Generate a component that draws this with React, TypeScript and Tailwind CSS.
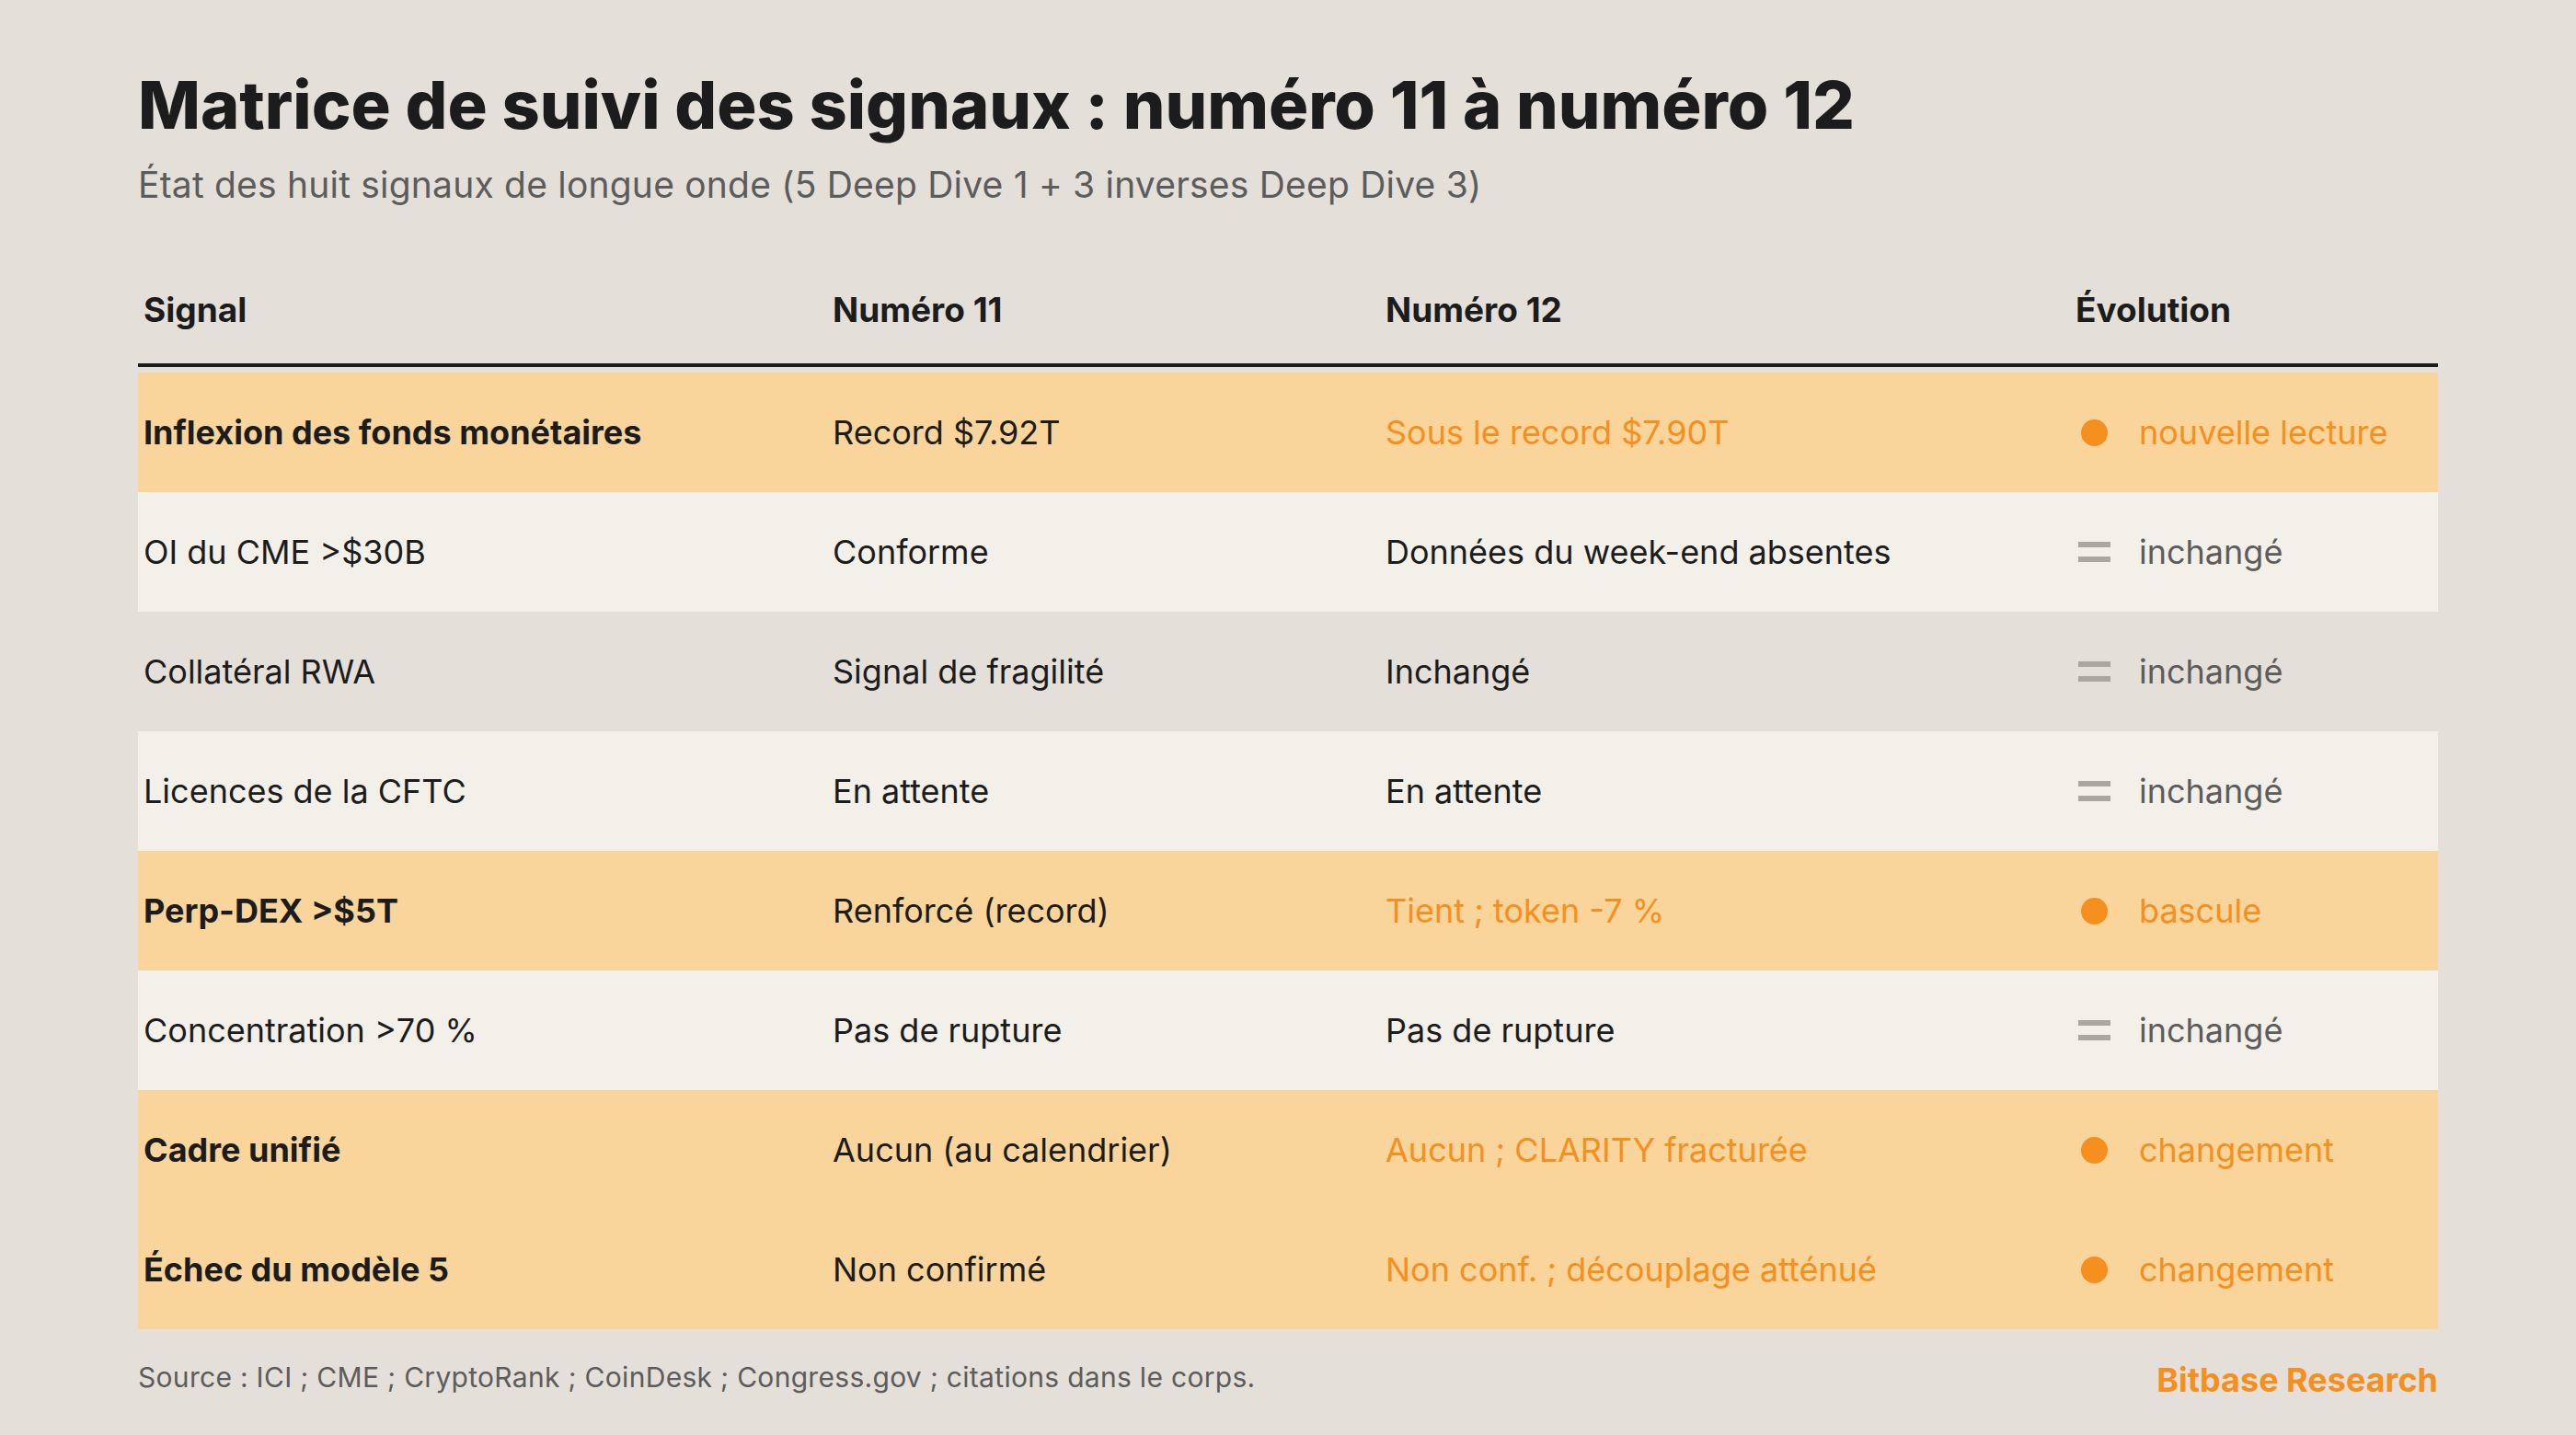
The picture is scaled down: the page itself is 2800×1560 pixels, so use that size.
const rows = [
  { signal: 'Inflexion des fonds monétaires', n11: 'Record $7.92T', n12: 'Sous le record $7.90T', evo: 'nouvelle lecture', hot: true },
  { signal: 'OI du CME >$30B', n11: 'Conforme', n12: 'Données du week-end absentes', evo: 'inchangé', hot: false },
  { signal: 'Collatéral RWA', n11: 'Signal de fragilité', n12: 'Inchangé', evo: 'inchangé', hot: false },
  { signal: 'Licences de la CFTC', n11: 'En attente', n12: 'En attente', evo: 'inchangé', hot: false },
  { signal: 'Perp-DEX >$5T', n11: 'Renforcé (record)', n12: 'Tient ; token -7 %', evo: 'bascule', hot: true },
  { signal: 'Concentration >70 %', n11: 'Pas de rupture', n12: 'Pas de rupture', evo: 'inchangé', hot: false },
  { signal: 'Cadre unifié', n11: 'Aucun (au calendrier)', n12: 'Aucun ; CLARITY fracturée', evo: 'changement', hot: true },
  { signal: 'Échec du modèle 5', n11: 'Non confirmé', n12: 'Non conf. ; découplage atténué', evo: 'changement', hot: true },
];

const cols = 'grid grid-cols-[750px_600px_750px_400px]';

export default function App() {
  return (
    <div className="min-h-screen bg-[#e4dfd9] px-[150px] pt-[78px] font-['Inter',sans-serif] text-[#1c1c1c]">
      <h1 className="text-[72px] font-extrabold leading-none">
        Matrice de suivi des signaux : numéro 11 à numéro 12
      </h1>
      <p className="mt-[31px] text-[39px] leading-none tracking-[0.2px] text-[#5c5c5c]">
        État des huit signaux de longue onde (5 Deep Dive 1 + 3 inverses Deep Dive 3)
      </p>

      <div className="mt-[98px] w-[2500px]">
        <div className={`${cols} border-b-4 border-[#1c1c1c] pb-[40px] text-[37px] font-bold leading-none`}>
          <div className="pl-[6px]">Signal</div>
          <div className="pl-[5px]">Numéro 11</div>
          <div className="pl-[6px]">Numéro 12</div>
          <div className="pl-[6px]">Évolution</div>
        </div>

        <div className="mt-[6px]">
          {rows.map((r, i) => {
            const bg = r.hot ? 'bg-[#f9d49b]' : i % 2 === 1 ? 'bg-[#f3f0e9]' : '';
            return (
              <div key={i} className={`${cols} h-[130px] items-center text-[36px] leading-none ${bg}`}>
                <div className={`pl-[6px] ${r.hot ? 'font-bold' : ''}`}>{r.signal}</div>
                <div className="pl-[5px]">{r.n11}</div>
                <div className={`pl-[6px] ${r.hot ? 'text-[#f5901e]' : ''}`}>{r.n12}</div>
                <div className="flex items-center gap-[31px] pl-[8px]">
                  <div className="flex w-[36px] items-center justify-center">
                    {r.hot ? (
                      <div className="h-[29px] w-[29px] rounded-full bg-[#f5901e]" />
                    ) : (
                      <div className="flex flex-col gap-[10px]">
                        <div className="h-[6px] w-[35px] bg-[#aba7a0]" />
                        <div className="h-[6px] w-[35px] bg-[#aba7a0]" />
                      </div>
                    )}
                  </div>
                  <span className={r.hot ? 'text-[#f5901e]' : 'text-[#5c5c5c]'}>{r.evo}</span>
                </div>
              </div>
            );
          })}
        </div>

        <div className="mt-[37px] flex items-start justify-between">
          <span className="text-[30px] leading-none tracking-[0.3px] text-[#5c5c5c]">
            Source : ICI ; CME ; CryptoRank ; CoinDesk ; Congress.gov ; citations dans le corps.
          </span>
          <span className="text-[36px] font-bold leading-none text-[#f5901e]">Bitbase Research</span>
        </div>
      </div>
    </div>
  );
}
